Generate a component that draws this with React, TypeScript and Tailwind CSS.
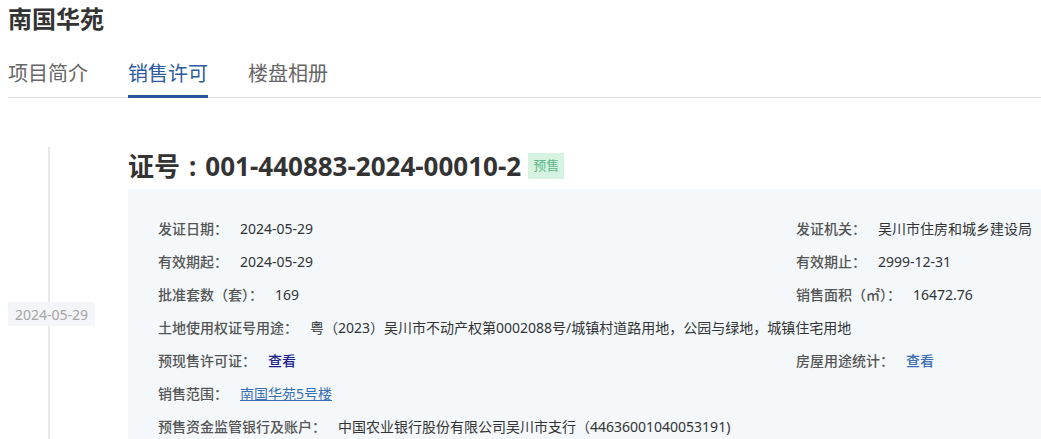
import React from "react";

const font = { fontFamily: '"Noto Sans", "Noto Sans CJK SC", sans-serif' };

function Label({ children }: { children: React.ReactNode }) {
  return <span className="text-[#555] font-medium">{children}</span>;
}

function Field({ label, children }: { label: string; children?: React.ReactNode }) {
  return (
    <div className="flex items-center h-[33px] whitespace-nowrap">
      <Label>{label}</Label>
      <span className="ml-[12px] text-[#333]">{children}</span>
    </div>
  );
}

export default function App() {
  return (
    <div className="bg-white w-[1041px] h-[439px] overflow-hidden pl-[8px] text-[#333]" style={font}>
      <h1 className="pt-[4px] text-[24px] leading-[30px] font-bold text-[#333]">南国华苑</h1>
      <div className="flex gap-[40px] border-b border-[#e3e3e3] mt-[26px]">
        <div className="text-[20px] leading-[28px] pb-[9px] text-[#666]">项目简介</div>
        <div className="text-[20px] leading-[28px] pb-[6px] text-[#2d5b9e] border-b-[3px] border-[#2a5598] -mb-px">销售许可</div>
        <div className="text-[20px] leading-[28px] pb-[9px] text-[#666]">楼盘相册</div>
      </div>
      <div className="flex">
        <div className="w-[120px] shrink-0 flex flex-col items-start pt-[49px]">
          <div className="ml-[40px] w-[2px] h-[155px] bg-[#e8e8e8]" />
          <div className="w-[87px] h-[24px] flex items-center justify-center bg-[#f4f5f8] text-[#a5a5a5] text-[14px]">2024-05-29</div>
          <div className="ml-[40px] w-[2px] h-[200px] bg-[#e8e8e8]" />
        </div>
        <div className="flex-1">
          <div className="mt-[53px] h-[30px] flex items-center">
            <span className="text-[26px] font-bold text-[#333] whitespace-nowrap">
              证号<span className="mx-[9px]">:</span>001-440883-2024-00010-2
            </span>
            <span className="ml-[7px] h-[26px] px-[5px] flex items-center bg-[#d6f3e2] text-[#5db787] text-[13px]">预售</span>
          </div>
          <div className="mt-[8px] bg-[#f4f8fb] pt-[23px] pl-[30px] text-[14px] h-[300px]">
            <div className="grid grid-cols-[638px_1fr]">
              <Field label="发证日期：">2024-05-29</Field>
              <Field label="发证机关：">吴川市住房和城乡建设局</Field>
              <Field label="有效期起：">2024-05-29</Field>
              <Field label="有效期止：">2999-12-31</Field>
              <Field label="批准套数（套）：">169</Field>
              <Field label="销售面积（㎡）：">16472.76</Field>
            </div>
            <Field label="土地使用权证号用途：">粤（2023）吴川市不动产权第0002088号/城镇村道路用地，公园与绿地，城镇住宅用地</Field>
            <div className="grid grid-cols-[638px_1fr]">
              <div className="flex items-center h-[33px] whitespace-nowrap">
                <Label>预现售许可证：</Label>
                <span className="ml-[12px] text-[#1c1f8a] font-medium">查看</span>
              </div>
              <div className="flex items-center h-[33px] whitespace-nowrap">
                <Label>房屋用途统计：</Label>
                <span className="ml-[12px] text-[#3d6db3] font-medium">查看</span>
              </div>
            </div>
            <div className="flex items-center h-[33px] whitespace-nowrap">
              <Label>销售范围：</Label>
              <span className="ml-[12px] text-[#3a6fb3] underline">南国华苑5号楼</span>
            </div>
            <Field label="预售资金监管银行及账户：">中国农业银行股份有限公司吴川市支行（44636001040053191)</Field>
          </div>
        </div>
      </div>
    </div>
  );
}
